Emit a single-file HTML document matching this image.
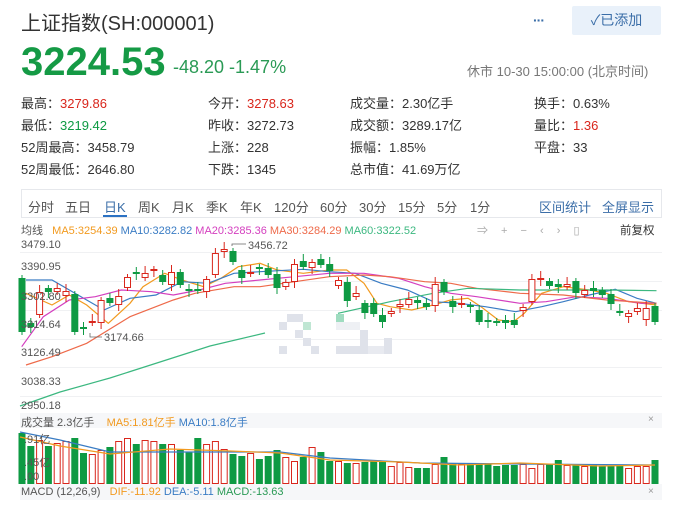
<!DOCTYPE html>
<html><head><meta charset="utf-8">
<style>
*{margin:0;padding:0;box-sizing:border-box}
body{width:676px;height:505px;overflow:hidden;background:#fff;font-family:"Liberation Sans","Noto Sans CJK SC",sans-serif;color:#333;position:relative}
.a{position:absolute;white-space:nowrap}
.g{color:#0e9a43}.r{color:#d9261c}
.st{font-size:13px;color:#333}
.tab{font-size:13px;color:#555;top:197px}
.ax{font-size:11px;color:#555}
</style></head><body>
<div class="a" style="left:21px;top:7px;font-size:20px;color:#333">上证指数(SH:000001)</div>
<div class="a" style="left:533px;top:12px;font-size:14px;color:#3b6ea8;font-weight:bold;letter-spacing:-1px">···</div>
<div class="a" style="left:572px;top:6px;width:89px;height:29px;background:#e9f1fa;border-radius:2px;color:#3b6ea8;font-size:14px;line-height:29px;text-align:center">✓已添加</div>
<div class="a g" style="left:21px;top:40px;font-size:40px;font-weight:bold;color:#159a45">3224.53</div>
<div class="a g" style="left:173px;top:57px;font-size:18px;color:#2a9a55">-48.20 -1.47%</div>
<div class="a" style="left:467px;top:61px;font-size:13px;color:#777">休市 10-30 15:00:00 (北京时间)</div>

<div class="a st" style="left:21px;top:93px">最高：<span class="r">3279.86</span></div>
<div class="a st" style="left:21px;top:115px">最低：<span class="g">3219.42</span></div>
<div class="a st" style="left:21px;top:137px">52周最高：3458.79</div>
<div class="a st" style="left:21px;top:159px">52周最低：2646.80</div>
<div class="a st" style="left:208px;top:93px">今开：<span class="r">3278.63</span></div>
<div class="a st" style="left:208px;top:115px">昨收：3272.73</div>
<div class="a st" style="left:208px;top:137px">上涨：228</div>
<div class="a st" style="left:208px;top:159px">下跌：1345</div>
<div class="a st" style="left:350px;top:93px">成交量：2.30亿手</div>
<div class="a st" style="left:350px;top:115px">成交额：3289.17亿</div>
<div class="a st" style="left:350px;top:137px">振幅：1.85%</div>
<div class="a st" style="left:350px;top:159px">总市值：41.69万亿</div>
<div class="a st" style="left:534px;top:93px">换手：0.63%</div>
<div class="a st" style="left:534px;top:115px">量比：<span class="r">1.36</span></div>
<div class="a st" style="left:534px;top:137px">平盘：33</div>

<div class="a" style="left:21px;top:189px;width:641px;height:29px;border:1px solid #e6e8ec"></div>
<div class="a tab" style="left:28px">分时</div>
<div class="a tab" style="left:65px">五日</div>
<div class="a tab" style="left:104px;color:#3b6ea8">日K</div>
<div class="a" style="left:103px;top:215px;width:24px;height:2px;background:#2b72c4"></div>
<div class="a tab" style="left:138px">周K</div>
<div class="a tab" style="left:172px">月K</div>
<div class="a tab" style="left:206px">季K</div>
<div class="a tab" style="left:240px">年K</div>
<div class="a tab" style="left:274px">120分</div>
<div class="a tab" style="left:320px">60分</div>
<div class="a tab" style="left:359px">30分</div>
<div class="a tab" style="left:398px">15分</div>
<div class="a tab" style="left:437px">5分</div>
<div class="a tab" style="left:470px">1分</div>
<div class="a tab" style="left:539px;color:#3b6ea8">区间统计</div>
<div class="a tab" style="left:602px;color:#3b6ea8">全屏显示</div>

<div class="a" style="left:21px;top:222px;font-size:11px"><span style="color:#555">均线</span>&nbsp;&nbsp; <span style="color:#f29a1f">MA5:3254.39</span> <span style="color:#3a7cc4">MA10:3282.82</span> <span style="color:#d43fbf">MA20:3285.36</span> <span style="color:#ee6a4a">MA30:3284.29</span> <span style="color:#3cb880">MA60:3322.52</span></div>
<div class="a" style="left:477px;top:222px;font-size:11px;color:#aaa;word-spacing:10px">⇒ + − ‹ › ▯</div>
<div class="a" style="left:620px;top:222px;font-size:11.5px;color:#333">前复权</div>

<svg class="a" style="left:0;top:0" width="676" height="505">
<g stroke="#f0f1f3" stroke-width="1">
<line x1="20" y1="252.5" x2="662" y2="252.5"/><line x1="20" y1="281.5" x2="662" y2="281.5"/>
<line x1="20" y1="310.5" x2="662" y2="310.5"/><line x1="20" y1="339.5" x2="662" y2="339.5"/>
<line x1="20" y1="367.5" x2="662" y2="367.5"/><line x1="20" y1="396.5" x2="662" y2="396.5"/>
</g>
<g fill="#dfe2ea">
<rect x="287" y="314" width="16" height="8"/><rect x="279" y="322" width="8" height="8"/><rect x="295" y="330" width="8" height="8"/><rect x="303" y="338" width="8" height="8"/><rect x="279" y="346" width="8" height="8"/><rect x="311" y="346" width="8" height="8"/>
<rect x="336" y="322" width="24" height="8" fill="#eef0f4"/><rect x="360" y="330" width="8" height="16"/><rect x="384" y="338" width="8" height="16"/><rect x="336" y="346" width="32" height="8"/><rect x="368" y="346" width="16" height="8" fill="#e8eaf0"/>
<rect x="303" y="322" width="8" height="8" fill="#bfe6d3"/><rect x="336" y="314" width="8" height="8" fill="#9fdcc0"/>
</g>
<g id="ma" fill="none" stroke-width="1.2"></g>
<g id="cd"></g>
<rect x="20" y="413" width="642" height="15" fill="#f6f7f9"/>
<rect x="20" y="484" width="642" height="16" fill="#f6f7f9"/>
<g id="vol"></g>
<g id="vma" fill="none" stroke-width="1.2"></g>
<text x="104" y="341" font-size="11" fill="#555" font-family="Liberation Sans">3174.66</text>
<text x="248" y="249" font-size="11" fill="#555" font-family="Liberation Sans">3456.72</text>
<polyline points="90,333 90,337 102,337" fill="none" stroke="#666" stroke-width="0.8"/>
<polyline points="232,246 232,244 246,244" fill="none" stroke="#666" stroke-width="0.8"/>
</svg>
<div class="a ax" style="left:21px;top:239px">3479.10</div>
<div class="a ax" style="left:21px;top:261px">3390.95</div>
<div class="a ax" style="left:21px;top:291px">3302.80</div>
<div class="a ax" style="left:21px;top:319px">3214.64</div>
<div class="a ax" style="left:21px;top:347px">3126.49</div>
<div class="a ax" style="left:21px;top:376px">3038.33</div>
<div class="a ax" style="left:21px;top:400px">2950.18</div>
<div class="a" style="left:21px;top:414px;font-size:11px"><span style="color:#555">成交量 2.3亿手</span>&nbsp;&nbsp;&nbsp; <span style="color:#f29a1f">MA5:1.81亿手</span> <span style="color:#3a7cc4">MA10:1.8亿手</span></div>
<div class="a" style="left:648px;top:414px;font-size:10px;color:#999">×</div>
<div class="a ax" style="left:24px;top:431px">.91亿</div>
<div class="a ax" style="left:24px;top:454px">.45亿</div>
<div class="a ax" style="left:24px;top:471px">.00</div>
<div class="a" style="left:21px;top:486px;font-size:11px"><span style="color:#555">MACD (12,26,9)</span>&nbsp;&nbsp; <span style="color:#f29a1f">DIF:-11.92</span> <span style="color:#3a7cc4">DEA:-5.11</span> <span style="color:#2a9a55">MACD:-13.63</span></div>
<div class="a" style="left:648px;top:486px;font-size:10px;color:#999">×</div>
<script>
var C=[[278,332,'G'],[323,327,'G'],[292,315,'R'],[288,292,'G'],[288,292,'R'],[291,296,'R'],[294,332,'G'],[327,329,'G'],[321,323,'R'],[300,323,'R'],[298,303,'G'],[296,305,'R'],[277,288,'R'],[272,274,'G'],[273,278,'R'],[269,271,'R'],[275,282,'G'],[272,285,'R'],[272,285,'G'],[289,291,'G'],[289,291,'G'],[279,292,'R'],[253,275,'R'],[249,252,'R'],[251,262,'G'],[270,278,'G'],[272,274,'R'],[267,269,'G'],[268,275,'G'],[274,288,'G'],[282,287,'R'],[264,282,'R'],[261,267,'G'],[262,268,'R'],[259,265,'G'],[264,271,'G'],[280,286,'R'],[282,301,'G'],[293,297,'R'],[303,313,'G'],[303,314,'G'],[315,322,'G'],[311,314,'R'],[304,307,'R'],[299,305,'R'],[300,303,'G'],[303,307,'G'],[284,306,'R'],[282,292,'G'],[301,307,'G'],[303,305,'R'],[305,307,'G'],[310,322,'G'],[320,322,'G'],[321,323,'G'],[320,323,'G'],[320,325,'G'],[307,311,'R'],[279,302,'R'],[278,280,'R'],[281,286,'G'],[284,287,'G'],[284,287,'R'],[281,293,'G'],[290,295,'R'],[288,291,'G'],[290,295,'G'],[294,304,'G'],[311,313,'G'],[313,317,'R'],[308,312,'R'],[308,320,'R'],[306,322,'G']];
var V=[433,446,440,446,443,441,438,453,454,450,447,441,438,444,440,441,444,444,450,452,438,444,441,449,454,456,453,459,456,450,457,461,457,447,452,461,461,463,463,462,460,461,466,462,467,468,468,464,457,463,464,464,463,464,466,465,465,464,468,464,464,460,465,464,466,465,466,466,465,468,466,466,460];
var n=C.length,x0=22,x1=655,dx=(x1-x0)/(n-1),s='',v='';
for(var i=0;i<n;i++){var c=C[i],x=x0+i*dx,col=c[2]=='G'?'#0e9a43':'#d9261c';
var w1=c[0]-3-(i%3)*2,w2=c[1]+3+(i%2)*3;
s+='<line x1="'+x.toFixed(1)+'" y1="'+w1+'" x2="'+x.toFixed(1)+'" y2="'+w2+'" stroke="'+col+'" stroke-width="1"/>';
var h=Math.max(c[1]-c[0],1.5);
if(c[2]=='G')s+='<rect x="'+(x-3.5).toFixed(1)+'" y="'+c[0]+'" width="7" height="'+h+'" fill="'+col+'"/>';
else s+='<rect x="'+(x-3).toFixed(1)+'" y="'+(c[0]+.5)+'" width="6" height="'+Math.max(h-1,1)+'" fill="#fff" stroke="'+col+'" stroke-width="1"/>';
var t=V[i]||465;
if(c[2]=='G')v+='<rect x="'+(x-3.5).toFixed(1)+'" y="'+t+'" width="7" height="'+(484-t)+'" fill="'+col+'"/>';
else v+='<rect x="'+(x-3).toFixed(1)+'" y="'+(t+.5)+'" width="6" height="'+(483-t)+'" fill="#fff" stroke="'+col+'" stroke-width="1"/>';}
document.getElementById('cd').innerHTML=s;document.getElementById('vol').innerHTML=v;
function P(a,base){var o=[];for(var i=0;i<a.length;i+=2)o.push((a[i]*676/1560).toFixed(1)+','+(base+a[i+1]/3).toFixed(1));return o.join(' ');}
var ma={'#f29a1f':[60,160,120,195,160,165,200,195,250,250,300,190,330,140,380,100,420,120,470,140,510,115,550,80,600,70,640,90,700,100,760,90,800,90,840,130,870,190,900,200,950,210,1000,195,1040,180,1080,175,1110,200,1150,240,1185,245,1210,220,1250,160,1300,140,1360,150,1400,160,1450,185,1515,195],
'#3a7cc4':[60,120,120,120,180,165,240,210,300,175,360,165,420,125,480,130,540,100,600,95,700,88,760,95,820,100,880,130,940,150,1000,185,1060,190,1120,200,1190,215,1250,200,1300,185,1360,165,1420,148,1470,175,1515,190],
'#d43fbf':[50,320,100,230,160,180,220,170,280,150,350,155,400,165,460,150,520,130,600,120,680,110,760,100,840,100,920,115,980,140,1040,160,1100,170,1200,190,1260,185,1330,170,1400,175,1480,190,1515,190],
'#ee6a4a':[60,375,120,350,200,310,300,230,400,180,450,160,540,140,600,140,680,125,760,110,840,105,900,110,980,125,1040,130,1100,145,1200,160,1300,165,1400,180,1515,190],
'#3cb880':[780,220,900,185,1000,160,1080,145,1200,150,1300,150,1400,150,1515,152]};
var m='';for(var k in ma)m+='<polyline stroke="'+k+'" points="'+P(ma[k],240)+'"/>';
m+='<polyline stroke="#3cb880" points="20,406 60,392 110,378 160,362 210,346 265,333"/>';
document.getElementById('ma').innerHTML=m;
document.getElementById('vma').innerHTML='<polyline stroke="#3a7cc4" points="20,432 60,440 110,452 200,452 280,452 330,458 420,463 520,464 655,465"/><polyline stroke="#f29a1f" points="20,437 60,446 110,454 170,449 230,451 280,453 330,460 400,462 460,465 520,463 600,466 655,465"/>';
</script>
</body></html>
